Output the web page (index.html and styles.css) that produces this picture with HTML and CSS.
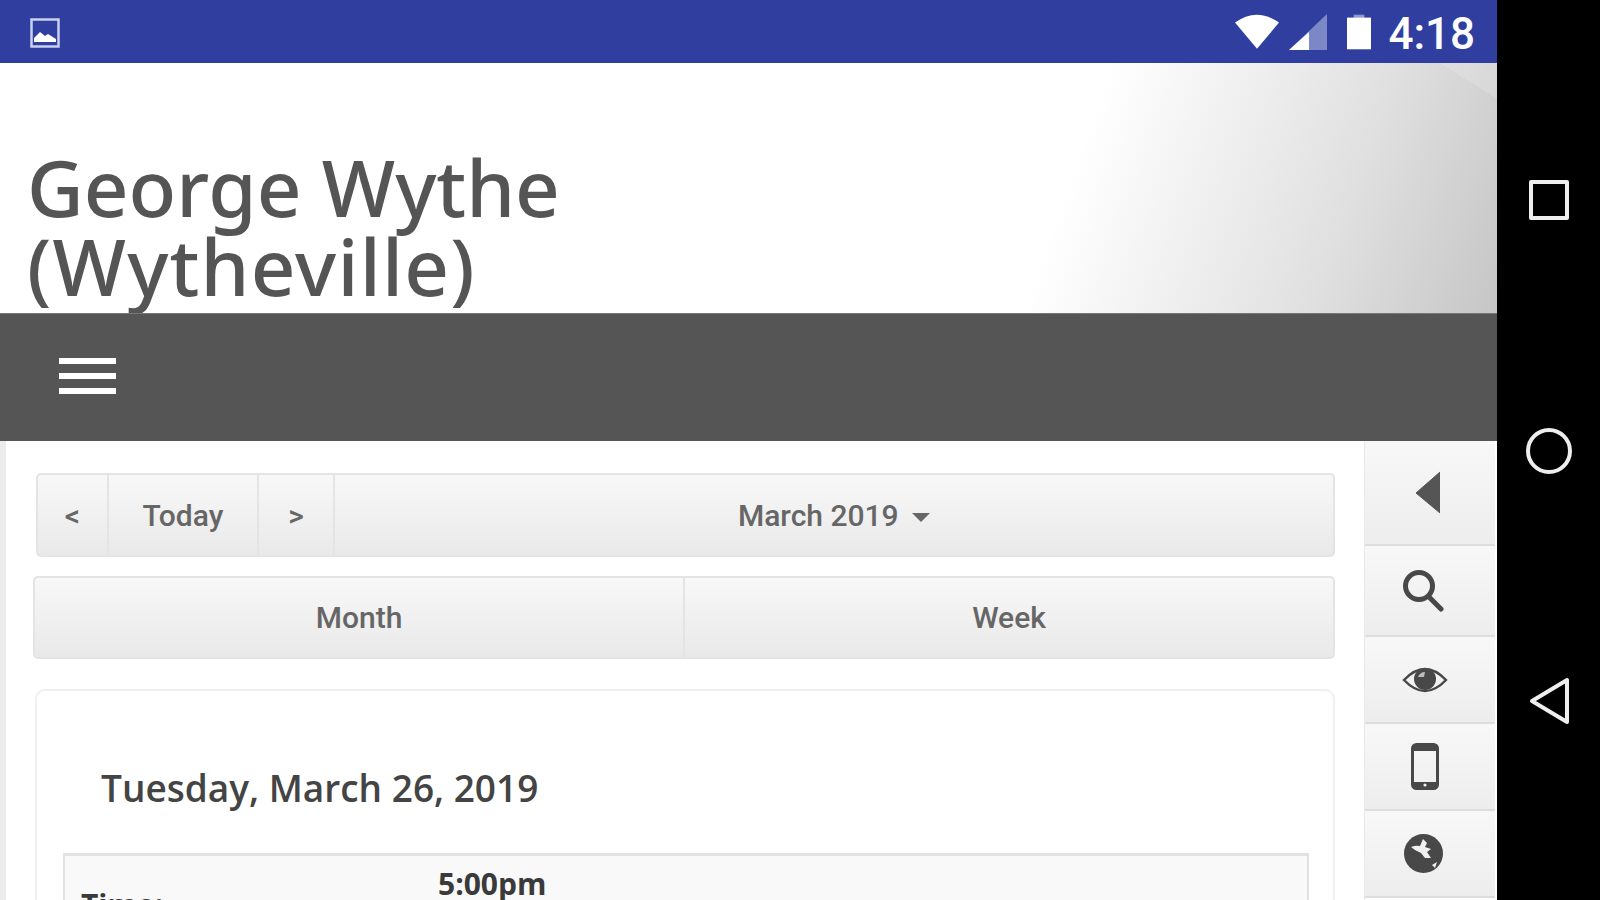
FILE: index.html
```html
<!DOCTYPE html>
<html lang="en">
<head>
    <meta charset="UTF-8">
    <meta name="viewport" content="width=device-width, initial-scale=1.0">
    <title>George Wythe (Wytheville)</title>
    <link rel="stylesheet" href="styles.css">
</head>
<body>
    <div class="device">
        <div class="app">
            <div class="statusbar">
                <svg class="notify-icon" viewBox="0 0 30 32">
                    <rect x="1.500" y="3.500" width="27" height="27" fill="none" stroke="#c9d0ec" stroke-width="2.500"/>
                    <path d="M4 26v-4l6-6 5 4 3-2 8 5v3z" fill="#fff"/>
                </svg>
                <div class="status-right">
                    <svg class="wifi" viewBox="0 0 47 37"><path d="M0 9Q23-8 47 9L23.500 37z" fill="#fff"/></svg>
                    <svg class="signal" viewBox="0 0 38 36">
                        <path d="M38 0v36H0z" fill="#7c88c6"/>
                        <path d="M20 18v18H0z" fill="#fff"/>
                    </svg>
                    <svg class="battery" viewBox="0 0 25 36">
                        <rect x="7" y="0" width="11" height="4" fill="#8f9ad0"/>
                        <rect x="0" y="3" width="25" height="33" fill="#fff"/>
                    </svg>
                    <span class="clock">4:18</span>
                </div>
            </div>

            <div class="site-header">
                <h1 class="site-title">George Wythe<br><span class="title-second">(Wytheville)</span></h1>
            </div>

            <div class="menu-bar">
                <div class="hamburger"><span></span><span></span><span></span></div>
            </div>

            <div class="main">
                <div class="content">
                    <div class="nav-row">
                        <button class="btn btn-prev">&lt;</button>
                        <button class="btn btn-today">Today</button>
                        <button class="btn btn-next">&gt;</button>
                        <button class="btn btn-month">March 2019 <span class="caret"></span></button>
                    </div>
                    <div class="view-row">
                        <button class="btn btn-view">Month</button>
                        <button class="btn btn-view">Week</button>
                    </div>
                    <div class="day-card">
                        <h2 class="day-title">Tuesday, March 26, 2019</h2>
                        <div class="event-table">
                            <div class="event-label">Time:</div>
                            <div class="event-value">5:00pm</div>
                        </div>
                    </div>
                </div>

                <div class="sidebar">
                    <div class="side-item side-first">
                        <svg class="side-back" viewBox="0 0 25 43"><path d="M25 1v41L1 22z" fill="#555" stroke="#555" stroke-linejoin="round"/></svg>
                    </div>
                    <div class="side-item side-second">
                        <svg class="side-search" viewBox="0 0 42 44">
                            <circle cx="17" cy="17" r="13.500" fill="none" stroke="#484848" stroke-width="5"/>
                            <path d="M27 28l12 12" stroke="#484848" stroke-width="5" stroke-linecap="round"/>
                        </svg>
                    </div>
                    <div class="side-item">
                        <svg class="side-eye" viewBox="0 0 46 30">
                            <path d="M2 15Q23-7 44 15Q23 37 2 15z" fill="none" stroke="#484848" stroke-width="2.500"/>
                            <circle cx="23" cy="14" r="11" fill="#484848"/>
                            <path d="M16 12q2-5 7-5l-1 5z" fill="#bbb"/>
                        </svg>
                    </div>
                    <div class="side-item">
                        <svg class="side-phone" viewBox="0 0 28 47">
                            <rect x="1.500" y="1.500" width="25" height="44" rx="4" fill="none" stroke="#484848" stroke-width="3"/>
                            <rect x="2" y="2" width="24" height="6" fill="#484848"/>
                            <rect x="2" y="39" width="24" height="6" fill="#484848"/>
                            <circle cx="14" cy="42" r="1.600" fill="#eee"/>
                        </svg>
                    </div>
                    <div class="side-item">
                        <svg class="side-globe" viewBox="0 0 39 39">
                            <circle cx="19.500" cy="19.500" r="19.500" fill="#484848"/>
                            <path d="M7 13q5-2 9-1l3-7 4 4-2 4 6 2-4 3 4 6-6 0-4-5-6-3z" fill="#f0f0f0"/>
                            <path d="M28 31l5-3-2 6z" fill="#f0f0f0"/>
                        </svg>
                    </div>
                </div>
            </div>
        </div>

        <div class="navbar">
            <div class="nav-square"></div>
            <div class="nav-circle"></div>
            <svg class="nav-back" viewBox="0 0 40 48"><path d="M38 3v42L3 24z" fill="none" stroke="#eee" stroke-width="4" stroke-linejoin="round"/></svg>
        </div>
    </div>
</body>
</html>
```

FILE: styles.css
```css
html, body {
    margin: 0;
    height: 100%;
    overflow: hidden;
}
body {
    font-family: 'Roboto', 'Liberation Sans', sans-serif;
    background: #000;
}
.device {
    display: flex;
    height: 900px;
}
.app {
    width: 1497px;
    height: 900px;
    overflow: hidden;
    display: flex;
    flex-direction: column;
    background: #fff;
}

/* status bar */
.statusbar {
    height: 63px;
    flex-shrink: 0;
    background: #303f9f;
    display: flex;
    align-items: center;
    justify-content: space-between;
    padding: 0 22px 0 30px;
}
.notify-icon {
    width: 30px;
    height: 32px;
}
.status-right {
    display: flex;
    align-items: center;
}
.wifi {
    width: 44px;
    height: 35px;
}
.signal {
    width: 38px;
    height: 36px;
    margin-left: 10px;
}
.battery {
    width: 24px;
    height: 36px;
    margin-left: 20px;
}
.clock {
    color: #fff;
    font-size: 44px;
    font-weight: 500;
    margin: 4px 0 0 17px;
    line-height: 50px;
}

/* site header */
.site-header {
    height: 250px;
    flex-shrink: 0;
    box-sizing: border-box;
    padding: 85px 0 0 27px;
    background:
        linear-gradient(212deg, rgba(255,255,255,0.15) 0 3%, transparent 3%),
        linear-gradient(110deg, #fff 70%, #e0e0e0 88%, #c6c6c6 100%);
}
.site-title {
    margin: 0;
    font-family: 'Noto Sans', sans-serif;
    font-size: 78px;
    font-weight: 500;
    line-height: 79px;
    color: #555;
}
.title-second {
    letter-spacing: 1.200px;
}
.menu-bar {
    height: 128px;
    flex-shrink: 0;
    box-sizing: border-box;
    padding: 44px 0 0 59px;
    background: #555;
    border-top: 1px solid #777;
}
.hamburger {
    width: 57px;
    display: flex;
    flex-direction: column;
    gap: 9px;
}
.hamburger span {
    height: 6px;
    background: #fff;
}

/* main area */
.main {
    flex: 1;
    display: flex;
    min-height: 0;
}
.content {
    flex: 1;
    min-width: 0;
    box-sizing: border-box;
    padding: 32px 29px 0 30px;
    border-left: 6px solid #ececec;
}
.btn {
    font-family: 'Roboto', 'Liberation Sans', sans-serif;
    font-size: 30px;
    font-weight: 500;
    color: #666;
    border: 2px solid #e4e4e4;
    border-left-width: 0;
    background: linear-gradient(#f8f8f8, #e9e9e9);
    padding: 0;
}
.btn:first-child {
    border-left-width: 2px;
    border-radius: 5px 0 0 5px;
}
.btn:last-child {
    border-radius: 0 5px 5px 0;
}
.nav-row {
    display: flex;
    height: 84px;
}
.btn-prev {
    width: 73px;
}
.btn-next {
    width: 76px;
}
.btn-today {
    width: 150px;
}
.btn-month {
    flex: 1;
}
.caret {
    display: inline-block;
    margin-left: 6px;
    vertical-align: middle;
    border-left: 9px solid transparent;
    border-right: 9px solid transparent;
    border-top: 9px solid #666;
}
.view-row {
    display: flex;
    height: 83px;
    margin: 19px 0 0 -3px;
}
.btn-view {
    flex: 1;
}

/* day card */
.day-card {
    margin-top: 30px;
    margin-left: -1px;
    height: 400px;
    box-sizing: border-box;
    padding: 74px 24px 0 26px;
    border: 2px solid #f0f0f0;
    border-radius: 10px 10px 0 0;
}
.day-title {
    margin: 0 0 0 38px;
    font-family: 'Open Sans', sans-serif;
    font-size: 37px;
    font-weight: 600;
    line-height: 46px;
    color: #444;
}
.event-table {
    margin-top: 42px;
    height: 120px;
    display: flex;
    background: #f9f9f9;
    border: 2px solid #e2e2e2;
    border-top-width: 3px;
    font-family: 'Open Sans', sans-serif;
    font-weight: 700;
    font-size: 30px;
    color: #3a3a3a;
}
.event-label {
    width: 357px;
    padding: 29px 0 0 16px;
    line-height: 40px;
}
.event-value {
    line-height: 40px;
    padding-top: 8px;
}

/* right tool column */
.sidebar {
    width: 130px;
    flex-shrink: 0;
    margin-right: 2px;
    border-left: 1px solid #e8e8e8;
}
.side-item {
    height: 85px;
    display: flex;
    align-items: center;
    justify-content: center;
    padding-right: 10px;
    background: linear-gradient(#f8f8f8, #ededed);
    border-bottom: 2px solid #ddd;
}
.side-first {
    height: 103px;
}
.side-second {
    height: 89px;
}
.side-back {
    width: 25px;
    height: 43px;
    margin: 0 0 0 5px;
}
.side-search {
    width: 42px;
    height: 44px;
    margin-right: 4px;
}
.side-eye {
    width: 46px;
    height: 30px;
}
.side-phone {
    width: 28px;
    height: 47px;
}
.side-globe {
    width: 39px;
    height: 39px;
    margin-right: 4px;
}

/* android nav */
.navbar {
    flex: 1;
    background: #000;
    display: flex;
    flex-direction: column;
    align-items: center;
}
.nav-square {
    box-sizing: border-box;
    width: 40px;
    height: 40px;
    margin-top: 180px;
    border: 4px solid #eee;
    border-radius: 2px;
}
.nav-circle {
    box-sizing: border-box;
    width: 46px;
    height: 46px;
    margin-top: 208px;
    border: 4px solid #eee;
    border-radius: 50%;
}
.nav-back {
    width: 40px;
    height: 48px;
    margin-top: 203px;
}
```
